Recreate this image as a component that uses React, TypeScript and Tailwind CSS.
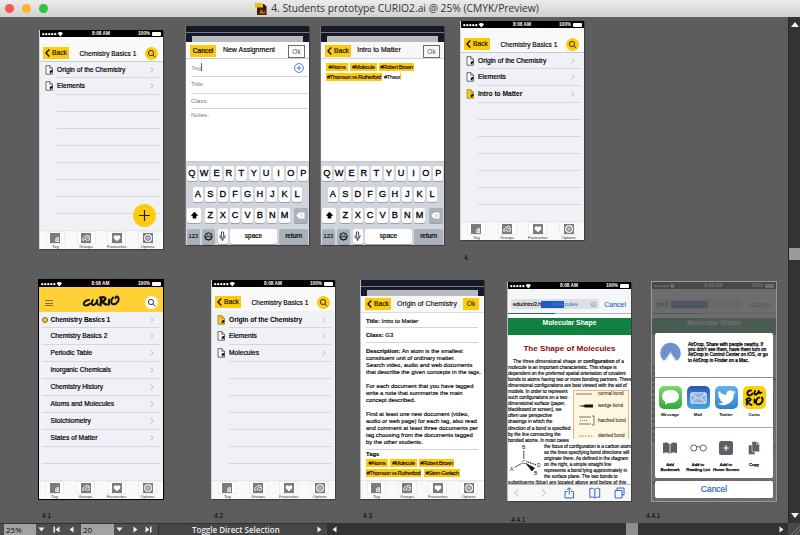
import type { ReactNode } from "react";

const SANS = "font-['Liberation_Sans',Arial,sans-serif]";

/* ---------- shared phone chrome ---------- */

function StatusBar() {
  return (
    <div className="flex h-[7px] shrink-0 items-center justify-between bg-black pr-[2px] pl-[2px] text-[4.700px] leading-[7px] font-bold text-white">
      <svg width="22" height="6" viewBox="0 0 22 6" fill="currentColor">
        {[1, 4, 7, 10, 13].map((x) => (
          <circle key={x} cx={x + 0.3} cy="3.2" r="1.15" />
        ))}
        <path d="M15.600 2.200Q18.300 0 21 2.200L18.300 5.400Z" />
      </svg>
      <span>8:08 AM</span>
      <span className="flex items-center gap-[2px]">
        <span>100%</span>
        <span className="h-[4px] w-[9px] rounded-[1px] bg-current" />
      </span>
    </div>
  );
}

function BackButton() {
  return (
    <div className="flex h-[12px] w-[26px] items-center gap-[2px] bg-[#fdcb0b] pl-[2px] text-[6.700px] leading-[12px] text-[#1c1a10] [-webkit-text-stroke:0.200px]">
      <svg width="5" height="8" viewBox="0 0 5 8" fill="none" stroke="#111" strokeWidth="1.400">
        <path d="M4.300.5 1 4l3.300 3.500" />
      </svg>
      <span>Back</span>
    </div>
  );
}

function SearchButton({ light = false }: { light?: boolean }) {
  return (
    <div className={`flex size-[13px] items-center justify-center rounded-full ${light ? "bg-white" : "bg-[#fdcb0b]"}`}>
      <svg width="9" height="9" viewBox="0 0 9 9" fill="none" stroke="#222" strokeWidth="0.9">
        <circle cx="4" cy="4" r="2.600" />
        <path d="m6 6 2.300 2.300" />
      </svg>
    </div>
  );
}

function TabGlyph({ kind }: { kind: string }) {
  return (
    <svg width="10" height="10" viewBox="0 0 10 10">
      <rect width="10" height="10" fill="#7c7c7c" />
      {kind === "Tag" && (
        <>
          <path d="M5.300 5.600 6.800 4.300H9V9H5.300Z" fill="#f2f2f2" />
          <path d="M6.500 5v3.500M7.800 5v3.500M5.800 6h2.900M5.800 7.500h2.900" stroke="#999" strokeWidth=".35" />
        </>
      )}
      {kind === "Groups" && (
        <g fill="none" stroke="#f2f2f2" strokeWidth=".9">
          <path d="M1.800 7.500V5L4.500 3l1.400 1.400L3.600 6.600Z" />
          <path d="M4.700 3 7 2l1.300 1.800v3.400H5.300L4 6M6 5l2-1" />
        </g>
      )}
      {kind === "Favourites" && (
        <path d="M5 8.200 1.800 5.200C.9 3.700 3.300 1 5 3.200 6.700 1 9.100 3.700 8.200 5.200Z" fill="#fff" />
      )}
      {kind === "Options" && (
        <g fill="none" stroke="#fff">
          <circle cx="5" cy="5" r="3.400" strokeWidth="1.300" />
          <circle cx="5" cy="5" r="1.300" strokeWidth=".8" />
          <path d="M5 1.500V3.500M5 6.500v2M1.500 5h2M6.500 5h2" stroke="#7c7c7c" strokeWidth=".7" />
        </g>
      )}
    </svg>
  );
}

function TabBar() {
  return (
    <div className="flex h-[19px] shrink-0 justify-around border-t border-[#e6e7ea] bg-[#f9f9f9]">
      {["Tag", "Groups", "Favourites", "Options"].map((kind) => (
        <div key={kind} className="flex w-[31px] flex-col items-center">
          <div className="flex h-[13px] w-[19px] items-center justify-center border border-[#ececec] bg-[#fcfcfc]">
            <TabGlyph kind={kind} />
          </div>
          <span className="text-[4.200px] leading-[5px] text-[#333]">{kind}</span>
        </div>
      ))}
    </div>
  );
}

function Artboard({ pos, frame = "", children }: { pos: string; frame?: string; children: ReactNode }) {
  return (
    <div className={`absolute flex h-[219px] w-[124px] flex-col overflow-hidden bg-[#eff1f6] shadow-[1px_1px_1px_#404040] ${pos} ${frame}`}>
      {children}
    </div>
  );
}

/* ---------- list screens ---------- */

function Chevron() {
  return (
    <svg width="4" height="6" viewBox="0 0 4 6" fill="none" stroke="#b4b6ba" strokeWidth=".9">
      <path d="m.600.400 2.400 2.500-2.400 2.600" />
    </svg>
  );
}

function DocIcon({ active }: { active?: boolean }) {
  return (
    <svg width="9" height="10" viewBox="0 0 9 10">
      <path d="M1 .6H4.700L7.500 3.300V9.200H1Z" fill={active ? "#fdc90c" : "#f7f8fb"} stroke={active ? "#8a7430" : "#333"} strokeWidth=".7" />
      <path d="M4.700.600V3.300H7.500" fill="none" stroke={active ? "#8a7430" : "#333"} strokeWidth=".6" />
      <path d="M4.800 5.600h1.700v2.600H4.800zM6 5.100h1.400v1.800H6z" fill="#111" />
    </svg>
  );
}

type Row = { label: string; active?: boolean };

function DocList({ pos, rows, fab, rule = true }: { pos: string; rows: Row[]; fab?: boolean; rule?: boolean }) {
  const all: (Row | null)[] = Array.from({ length: 9 }, (_, i) => rows[i] ?? null);
  return (
    <Artboard pos={pos} frame="border-l border-[#d8d8d8]">
      <StatusBar />
      <div
        className={`flex h-[25px] shrink-0 justify-between border-b bg-[#f9f9f9] pr-[5px] pl-[3px] ${rule ? "border-[#c9cacc] pt-[10px]" : "border-[#eff1f6] pt-[9px]"}`}
      >
        <BackButton />
        <span className="ml-[2px] text-[6.660px] leading-[13px] whitespace-nowrap text-black [-webkit-text-stroke:0.150px]">Chemistry Basics 1</span>
        <SearchButton />
      </div>
      <div className="grow">
        {all.map((row, i) => (
          <div key={i} className={`flex pr-[3px] pl-[5px] ${i === 0 ? "h-[16px]" : "h-[17px]"}`}>
            <div className="w-[12px] pt-[3px]">{row && <DocIcon active={row.active} />}</div>
            <div className="flex grow items-center justify-between border-b border-[#d5d7dc] pr-[6px]">
              <span className={`text-[6.700px] leading-[8px] whitespace-nowrap text-black ${row?.active ? "font-bold tracking-[-0.050px]" : "[-webkit-text-stroke:0.200px]"}`}>{row?.label}</span>
              {row && <Chevron />}
            </div>
          </div>
        ))}
      </div>
      {fab && (
        <div className="absolute right-[7px] bottom-[22px] flex size-[23px] items-center justify-center rounded-full bg-[#fdcb12]">
          <svg width="13" height="13" viewBox="0 0 13 13" stroke="#222" strokeWidth="1.200">
            <path d="M6.500 1v11M1 6.500h11" />
          </svg>
        </div>
      )}
      <TabBar />
    </Artboard>
  );
}

function CurioMark() {
  return (
    <svg width="38" height="15" viewBox="0 0 38 15" fill="none" stroke="#111" strokeLinecap="round" strokeLinejoin="round">
      <path d="M7 6C3 5.800 .9 9.500 2.300 11 3.700 12 6.500 11 8.200 9.600" strokeWidth="1.900" />
      <path d="M10.800 6C9.300 8.500 9.500 11.300 11.500 11 13.500 10.500 14.800 8 15.300 6 14.700 8.600 15 10.300 16.600 10.600" strokeWidth="1.900" />
      <path d="M19.300 4 18.500 11.300M18 3.600C22 2.200 24.500 4 23 5.700 22 6.900 20 7.500 19.500 7.500 21 8 22.500 10.300 24.800 10.600" strokeWidth="2.300" />
      <path d="M27.300 5.600 26.800 10.400" strokeWidth="2.300" />
      <path d="M31 3.500C28.700 6 28.600 10.300 31.500 10.300 35 10.300 38 5.600 36 3 35 2 33.300 2.700 33.600 4.300" strokeWidth="1.900" />
    </svg>
  );
}

const SUBJECTS = [
  "Chemistry Basics 1",
  "Chemistry Basics 2",
  "Periodic Table",
  "Inorganic Chemicals",
  "Chemistry History",
  "Atoms and Molecules",
  "Stoichiometry",
  "States of Matter",
  "",
];

function HomeScreen({ pos }: { pos: string }) {
  return (
    <Artboard pos={pos} frame="outline outline-black">
      <StatusBar />
      <div className="flex h-[25px] shrink-0 justify-between bg-[#ffd137] pr-[5px] pl-[6px]">
        <div className="mt-[13px] flex h-[6px] w-[8px] flex-col justify-between">
          <div className="h-px bg-[#7f6d31]" />
          <div className="h-px bg-[#7f6d31]" />
          <div className="h-px bg-[#7f6d31]" />
        </div>
        <div className="mt-[7px] ml-[3px]">
          <CurioMark />
        </div>
        <div className="mt-[9px]">
          <SearchButton light />
        </div>
      </div>
      <div className="grow pr-[3px] pl-[3px]">
        {SUBJECTS.map((s, i) => (
          <div key={i} className={`flex items-center border-b border-[#d5d7dc] pr-[6px] ${i === 0 ? "h-[16px]" : "h-[17px]"}`}>
            <div className="w-[8.500px] shrink-0">{i === 0 && <div className="size-[6px] rounded-full border border-[#7a6a25] bg-[#fdcb12]" />}</div>
            <span className={`grow text-[6.660px] leading-[8px] whitespace-nowrap text-black ${i === 0 ? "font-bold tracking-[-0.100px]" : "[-webkit-text-stroke:0.200px]"}`}>{s}</span>
            {s && <Chevron />}
          </div>
        ))}
      </div>
      <TabBar />
    </Artboard>
  );
}

/* ---------- modal sheets ---------- */

function ModalTop() {
  return (
    <>
      <div className="h-[6px] shrink-0 bg-[#151a2b]" />
      <div className="h-px shrink-0 bg-[#777a82]" />
      <div className="flex h-[9px] shrink-0 flex-col bg-[#151a2b] px-[6px] pt-[3px]">
        <div className="grow bg-[#b9babc]" />
      </div>
    </>
  );
}

function Chip({ w, children }: { w: string; children: ReactNode }) {
  return (
    <span className={`flex h-[8px] items-center justify-center bg-[#fdc90c] text-[5.700px] leading-[8px] tracking-[-0.400px] whitespace-nowrap text-black [-webkit-text-stroke:0.100px] ${w}`}>
      {children}
    </span>
  );
}

function Key({ w, tone = "bg-[#fdfdfd]", children }: { w: string; tone?: string; children: ReactNode }) {
  return (
    <div className={`flex h-[15px] items-center justify-center rounded-[2px] leading-none text-black shadow-[0_1px_0_#9da1a8] ${w} ${tone}`}>
      {children}
    </div>
  );
}

function Letters({ set }: { set: string }) {
  return (
    <div className="flex gap-[2px]">
      {set.split("").map((c) => (
        <Key key={c} w="w-[10.400px]">
          <span className="text-[9.200px] [-webkit-text-stroke:0.300px]">{c}</span>
        </Key>
      ))}
    </div>
  );
}

function Keyboard() {
  return (
    <div className="flex h-[84px] shrink-0 flex-col gap-[6px] border-t border-[#c2c7ce] bg-[#d0d5dc] px-[1px] pt-[4px] text-[6px]">
      <div className="flex justify-center">
        <Letters set="QWERTYUIOP" />
      </div>
      <div className="flex justify-center">
        <Letters set="ASDFGHJKL" />
      </div>
      <div className="flex justify-between">
        <Key w="w-[14px]">
          <svg width="9" height="9" viewBox="0 0 9 9">
            <path d="M4.500.800 8.300 4.700H6.300V7.500H2.700V4.700H.700Z" />
          </svg>
        </Key>
        <Letters set="ZXCVBNM" />
        <Key w="w-[14px]" tone="bg-[#a9b1bb]">
          <svg width="9" height="7" viewBox="0 0 9 7">
            <path d="M3 .500H8.500V6.500H3L.300 3.500Z" fill="#fff" />
            <path d="m4.300 2.200 2.500 2.600m0-2.600L4.300 4.800" stroke="#a9b1bb" strokeWidth=".7" />
          </svg>
        </Key>
      </div>
      <div className="flex gap-[2.500px]">
        <Key w="w-[13px]" tone="bg-[#a9b1bb]">
          <span className="text-[5.800px] [-webkit-text-stroke:0.100px]">123</span>
        </Key>
        <Key w="w-[13px]" tone="bg-[#a9b1bb]">
          <svg width="9" height="9" viewBox="0 0 9 9" fill="none" stroke="#111" strokeWidth=".9">
            <circle cx="4.500" cy="4.500" r="3.700" />
            <path d="M1.300 4.700H7.700C7.300 8.500 1.700 8.500 1.300 4.700Z" />
            <path d="M3.100 2v1.300M5.900 2v1.300" />
          </svg>
        </Key>
        <Key w="w-[10px]">
          <svg width="7" height="11" viewBox="0 0 7 11" fill="none" stroke="#111" strokeWidth=".8">
            <rect x="2.300" y=".8" width="2.400" height="6" rx="1.200" />
            <path d="M.900 4.500C.900 9.300 6.100 9.300 6.100 4.500M3.500 8v2" />
          </svg>
        </Key>
        <Key w="w-[47px]">
          <span className="text-[6.500px] [-webkit-text-stroke:0.200px]">space</span>
        </Key>
        <Key w="w-[29px]" tone="bg-[#a9b1bb]">
          <span className="text-[6.500px] [-webkit-text-stroke:0.200px]">return</span>
        </Key>
      </div>
    </div>
  );
}

function OkOutline() {
  return <div className="h-[13px] w-[17px] border border-[#6b6b6b] text-center text-[6.500px] leading-[12px] text-[#555]">Ok</div>;
}

function NewAssignment({ pos }: { pos: string }) {
  return (
    <Artboard pos={pos} frame="border-l border-[#777]">
      <ModalTop />
      <div className="flex h-[17px] shrink-0 items-start justify-between border-b border-[#c9cacc] bg-[#fdfdfd] pt-[2.500px] pr-[4px] pl-[4px]">
        <div className="h-[12px] w-[26px] bg-[#fdcb0b] text-center text-[6.600px] leading-[12px] text-black [-webkit-text-stroke:0.200px]">Cancel</div>
        <span className="mr-[6px] text-[7px] leading-[9px] whitespace-nowrap text-black [-webkit-text-stroke:0.150px]">New Assignment</span>
        <OkOutline />
      </div>
      <div className="grow bg-white pr-px pl-[5px] text-[6.200px] leading-[8px] text-[#777]">
        <div className="flex h-[18px] items-center justify-between border-b border-[#d8d8d8] pr-[4px]">
          <div className="flex items-center">
            <span className="text-[#999]">Tag</span>
            <span className="-mt-px h-[8px] w-px bg-[#2f62c4]" />
          </div>
          <svg width="10" height="10" viewBox="0 0 9 9" fill="none" stroke="#3f6fce" strokeWidth=".8">
            <circle cx="4.500" cy="4.500" r="4" />
            <path d="M4.500 2.300v4.400M2.300 4.500h4.400" />
          </svg>
        </div>
        <div className="flex h-[17px] items-center border-b border-[#d8d8d8] pb-[2px]">Title:</div>
        <div className="flex h-[15px] items-center border-b border-[#d8d8d8] pb-px">Class:</div>
        <div className="pt-[2px]">Notes:</div>
      </div>
      <Keyboard />
    </Artboard>
  );
}

function IntroToMatter({ pos }: { pos: string }) {
  return (
    <Artboard pos={pos} frame="border-l border-[#777]">
      <ModalTop />
      <div className="flex h-[17px] shrink-0 items-start justify-between border-b border-[#d4d4d4] bg-[#f7f7f7] pt-[2.500px] pr-[4px] pl-[4px]">
        <BackButton />
        <span className="mr-[16px] text-[7px] leading-[9px] whitespace-nowrap text-black [-webkit-text-stroke:0.150px]">Intro to Matter</span>
        <OkOutline />
      </div>
      <div className="flex grow flex-col gap-[1.500px] bg-white pt-[4px] pl-[5px]">
        <div className="flex gap-[2px]">
          <Chip w="w-[22px]">#Atoms</Chip>
          <Chip w="w-[27px]">#Molecule</Chip>
          <Chip w="w-[35px]">#Robert Brown</Chip>
        </div>
        <div className="flex items-center gap-[2px]">
          <Chip w="w-[56px]">#Thomson vs Rutherford</Chip>
          <span className="text-[5.700px] leading-[8px] tracking-[-0.300px] text-black [-webkit-text-stroke:0.100px]">#Theor</span>
          <span className="-ml-[2px] h-[7px] w-px bg-[#fdc90c]" />
        </div>
      </div>
      <Keyboard />
    </Artboard>
  );
}

function OriginOfChemistry({ pos }: { pos: string }) {
  return (
    <Artboard pos={pos} frame="border-l border-[#bbb]">
      <ModalTop />
      <div className="flex h-[17px] shrink-0 items-start justify-between border-b border-[#dcdcdc] bg-[#f7f7f7] pt-[2px] pr-[5px] pl-[4px]">
        <BackButton />
        <span className="text-[7px] leading-[12.500px] whitespace-nowrap text-black [-webkit-text-stroke:0.100px]">Origin of Chemistry</span>
        <div className="h-[12px] w-[16px] bg-[#fdcb0b] text-center text-[6.500px] leading-[12px] text-black">Ok</div>
      </div>
      <div className="grow bg-white pr-[6px] pl-[5px] text-[5.900px] leading-[7px] whitespace-nowrap text-black [-webkit-text-stroke:0.150px]">
        <div className="h-[15px] border-b border-[#d5d5d5] pt-[5px]">
          <b>Title:</b> Intro to Matter
        </div>
        <div className="h-[15px] border-b border-[#d5d5d5] pt-[4px]">
          <b>Class:</b> G3
        </div>
        <div className="flex h-[107px] flex-col gap-[7px] border-b border-[#d5d5d5] pt-[4.500px]">
          <p>
            <b>Description:</b> An atom is the smallest
            <br />
            constituent unit of ordinary matter.
            <br />
            Search video, audio and web documents
            <br />
            that describe the given concepts in the tags.
          </p>
          <p>
            For each document that you have tagged
            <br />
            write a note that summarize the main
            <br />
            concept described.
          </p>
          <p>
            Find at least one new document (video,
            <br />
            audio or web page) for each tag, also read
            <br />
            and comment at least three documents per
            <br />
            tag choosing from the documents tagged
            <br />
            by the other students.
          </p>
        </div>
        <div className="pt-px font-bold">Tags</div>
        <div className="mt-[1px] flex gap-[2px]">
          <Chip w="w-[22px]">#Atoms</Chip>
          <Chip w="w-[27px]">#Molecule</Chip>
          <Chip w="w-[35px]">#Robert Brown</Chip>
        </div>
        <div className="mt-[1.500px] flex gap-[3px]">
          <Chip w="w-[55px]">#Thomson vs Rutherford</Chip>
          <Chip w="w-[36px]">#Stern-Gerlach</Chip>
        </div>
      </div>
      <TabBar />
    </Artboard>
  );
}

/* ---------- browser screens ---------- */

const INTRO = [
  "molecule is an important characteristic. This shape is",
  "dependent on the preferred spatial orientation of covalent",
  "bonds to atoms having two or more bonding partners. Three",
  "dimensional configurations are best viewed with the aid of",
];

const LEFT = [
  "models. In order to represent",
  "such configurations on a two-",
  "dimensional surface (paper,",
  "blackboard or screen), we",
  "often use perspective",
  "drawings in which the",
  "direction of a bond is specified",
  "by the line connecting the",
  "bonded atoms. In most cases",
];

const RIGHT = [
  "the focus of configuration is a carbon atom",
  "so the lines specifying bond directions will",
  "originate there. As defined in the diagram",
  "on the right, a simple straight line",
  "represents a bond lying approximately in",
  "the surface plane. The two bonds to",
];

function BondLegend() {
  return (
    <div className="mt-px flex h-[49px] w-[56px] flex-col justify-between border border-b-0 border-[#f3b183] bg-[#fef7dd] pr-[3px] pb-px pl-[2px] text-[4.600px] leading-[5px] [-webkit-text-stroke:0px]">
      <div className="flex items-center justify-between">
        <svg width="16" height="4"><path d="M0 2H16" stroke="#555" strokeWidth=".8" /></svg>
        <span className="w-[27px]">normal bond</span>
      </div>
      <div className="flex items-center justify-between">
        <svg width="17" height="4"><path d="M2 2 8 1.200 9 .500H17V3.500H9L8 2.800Z" fill="#111" /></svg>
        <span className="w-[27px]">wedge bond</span>
      </div>
      <div className="flex items-center justify-between">
        <svg width="20" height="11" fill="none" stroke="#555" strokeWidth=".8">
          <path d="M3 2H15M3 9H15M16 1h2v9h-2" />
          <path d="M4 5.500H12" strokeDasharray="1 1" />
        </svg>
        <span className="w-[27px]">hatched bond</span>
      </div>
      <div className="flex items-center justify-between">
        <svg width="18" height="4"><path d="M3 2H18" stroke="#555" strokeWidth=".8" strokeDasharray="1.500 1.500" /></svg>
        <span className="w-[27px]">dashed bond</span>
      </div>
    </div>
  );
}

function Molecule() {
  return (
    <svg width="34" height="36" viewBox="0 0 34 36" fill="none" stroke="#222" strokeWidth=".8" className="text-[5px]">
      <g fill="#222" stroke="none">
        <text x="14" y="5.500">B</text>
        <text x="14" y="20">C</text>
        <text x="2" y="27">A</text>
        <text x="29" y="23">D</text>
        <text x="26" y="31">B</text>
      </g>
      <path d="M15.800 6.500V15M13.500 19.500 6.500 23.500" />
      <path d="m18.500 17.500 10 3.500" strokeDasharray="1 .8" strokeWidth="1.300" />
      <path d="m18 19.500 8.500 4.500-2.500 3Z" fill="#111" />
    </svg>
  );
}

function WebPage({ url, picked, rest }: { url: string; picked: string; rest: string }) {
  return (
    <>
      <StatusBar />
      <div className="flex h-[25px] shrink-0 flex-col justify-end bg-[#f5f6f7]">
        <div className="mb-[4px] flex h-[10px] items-center justify-between pr-[5px] pl-[3px] text-[5.700px] leading-[7px]">
          <div className="flex h-[10px] w-[88px] items-center rounded-[2px] bg-[#dcdfe4] pr-[3px] pl-[2px] text-black">
            <span className="tracking-[-0.150px] [-webkit-text-stroke:0.100px]">{url}</span>
            <span className={`h-[7px] bg-[#1f5cbc] text-right tracking-[0.100px] text-[#4a7fd6] ${picked}`}>{rest && "Mole"}</span>
            <span className="grow text-[#2a62c0]">{rest}</span>
            <span className="flex size-[5px] items-center justify-center rounded-full bg-[#a9abb0] text-[5px] leading-none text-white">×</span>
          </div>
          <span className="text-[7px] text-[#2864c8] [-webkit-text-stroke:0.100px]">Cancel</span>
        </div>
        <div className="flex h-px bg-[#b9bbbe]">
          <div className="w-[47px] bg-[#1f5cbc]" />
        </div>
      </div>
      <div className="flex grow flex-col overflow-hidden bg-white text-black">
        <div className="mt-[4px] h-[17px] shrink-0 bg-[#10813f] text-center text-[6.800px] leading-[10px] font-bold text-white">Molecular Shape</div>
        <div className="h-[24px] shrink-0 pt-[9px] text-center text-[8.100px] leading-[9px] font-bold text-[#8c0d12]">The Shape of Molecules</div>
        <div className="h-[125px] shrink-0 overflow-hidden text-[4.900px] leading-[6.050px] whitespace-nowrap [-webkit-text-stroke:0.120px]">
          <div className="pl-[5px]">
            The three dimensional shape or <b>configuration</b> of a
          </div>
          {INTRO.map((l) => (
            <div key={l} className="tracking-[-0.110px]">{l}</div>
          ))}
          <div className="flex justify-between pr-[2px]">
            <div>
              {LEFT.map((l) => (
                <div key={l} className="tracking-[-0.110px]">{l}</div>
              ))}
            </div>
            <BondLegend />
          </div>
          <div className="flex gap-[2px]">
            <Molecule />
            <div>
              {RIGHT.map((l) => (
                <div key={l} className="tracking-[-0.120px]">{l}</div>
              ))}
            </div>
          </div>
          <div>substituents (blue) are located above and below of this</div>
        </div>
      </div>
      <div className="flex h-[17px] shrink-0 items-center justify-between border-t border-[#b8b8b8] bg-[#f8f8f8] pr-[6px] pl-[6px]">
        <svg width="112" height="12" viewBox="0 0 112 12" fill="none" stroke="#2f66c8" strokeWidth="1">
          <path d="M4.500 2 1 5.800l3.500 3.800M28 2l3.500 3.800L28 9.600" stroke="#b5b7bb" />
          <path d="M54 4.500H51.500V11H60V4.500H57.500M55.700 7.500V.800M53.500 2.800 55.700.700 58 2.800" />
          <path d="M81.500 2.500C80 1 78 1 76.500 1.500V10.500C78.500 9.800 80 10 81.500 11 83.500 10 85 9.800 86.500 10.500V1.500C85 1 83.500 1 81.500 2.500V11" />
          <path d="M102 3.500h7v7.500h-7zM104 3.500V1h7v7h-2" />
        </svg>
      </div>
    </>
  );
}

function MoleculesPage({ pos }: { pos: string }) {
  return (
    <Artboard pos={pos} frame="border-l border-[#bbb]">
      <WebPage url="edu/intro3.h" picked="w-[23px]" rest="cules" />
    </Artboard>
  );
}

function ShareTile({ label, tone, children }: { label: string; tone: string; children: ReactNode }) {
  return (
    <div className="flex w-[28px] flex-col items-center gap-[2.500px]">
      <div className={`flex size-[23px] items-center justify-center rounded-[5px] ${tone}`}>{children}</div>
      <span className="text-[4.400px] leading-[5px] font-bold tracking-[-0.050px]">{label}</span>
    </div>
  );
}

function ActionTile({ lines, children }: { lines: string[]; children: ReactNode }) {
  return (
    <div className="flex w-[28px] flex-col items-center">
      <div className="flex h-[15px] items-center">{children}</div>
      <div className="mt-[7px] text-center text-[4.300px] leading-[5px] tracking-[-0.020px] whitespace-nowrap [-webkit-text-stroke:0.250px]">
        {lines.map((l) => (
          <div key={l} className="h-[5px]">{l}</div>
        ))}
      </div>
    </div>
  );
}

function ShareSheet() {
  return (
    <div className="absolute inset-0 flex flex-col bg-[#555555]/85 px-[3px] pt-[51px] text-black">
      <div className="h-[145px] shrink-0 rounded-[2px] bg-white">
        <div className="flex h-[45px] gap-[7px] border-b border-[#8b8b8b] pt-[9px] pl-[5px]">
          <svg width="21" height="21" viewBox="0 0 21 21" fill="none" stroke="#4d6fae" strokeWidth=".9">
            <path d="M10.500 10.500 4 19A10.300 10.300 0 1 1 17 19Z" fill="#7b9ad2" stroke="none" />
            {[2.5, 4.5, 6.5, 8.5].map((r) => (
              <circle key={r} cx="10.500" cy="10.500" r={r} strokeWidth=".5" stroke="#4d72b8" />
            ))}
            <path d="M10.500 11 5.500 21H15.500Z" fill="#fff" stroke="none" />
          </svg>
          <div className="text-[4.600px] leading-[5.200px] whitespace-nowrap [-webkit-text-stroke:0.250px]">
            <div>AirDrop. Share with people nearby. If</div>
            <div>you don’t see them, have them turn on</div>
            <div>AirDrop in Control Center on iOS, or go</div>
            <div>to AirDrop in Finder on a Mac.</div>
          </div>
        </div>
        <div className="flex h-[50px] justify-between border-b border-[#a8a8a8] pt-[8px] pr-[5px] pl-[1px]">
          <ShareTile label="Message" tone="bg-linear-to-b from-[#7fd66c] to-[#31ab3a]">
            <svg width="19" height="17" viewBox="0 0 19 17">
              <path d="M9.500 1C4.500 1 1 3.800 1 7.500c0 2.300 1.300 4.200 3.400 5.400L4 15.600 7.500 13.900C14 14.500 18 11.500 18 7.500S14.500 1 9.500 1Z" fill="#fff" />
            </svg>
          </ShareTile>
          <ShareTile label="Mail" tone="bg-linear-to-b from-[#2b59b5] to-[#49a6e0]">
            <svg width="17" height="12" viewBox="0 0 17 12" fill="none" stroke="#fff" strokeWidth=".8">
              <rect x=".8" y=".800" width="15.400" height="10.400" rx="1" fill="#8fb2e2" />
              <path d="m1 1.500 7.500 5.500L16 1.500M1.200 10.800l5-5M15.800 10.800l-5-5" />
            </svg>
          </ShareTile>
          <ShareTile label="Twitter" tone="bg-linear-to-b from-[#62b0e6] to-[#3485c8]">
            <svg width="19" height="16" viewBox="0 0 24 20" fill="#fff">
              <path d="M23.500 2.500a9 9 0 0 1-2.600.7 4.600 4.600 0 0 0 2-2.500 9 9 0 0 1-2.900 1.100 4.700 4.700 0 0 0-8 4.300A13.300 13.300 0 0 1 2.300 1.200a4.700 4.700 0 0 0 1.500 6.300 4.600 4.600 0 0 1-2.100-.6c0 2.300 1.600 4.200 3.800 4.700-.7.200-1.400.2-2.100.1a4.700 4.700 0 0 0 4.400 3.200A9.400 9.400 0 0 1 .900 16.900 13.300 13.300 0 0 0 21.200 5a9 9 0 0 0 2.300-2.500Z" />
            </svg>
          </ShareTile>
          <ShareTile label="Curio" tone="bg-[#ffd00a]">
            <svg width="22" height="21" viewBox="0 0 22 21" fill="none" stroke="#111" strokeWidth="1.900" strokeLinecap="round" strokeLinejoin="round">
              <path d="M8 3.500C4.500 3 3.500 7 5.300 8.200 6.500 9 8.500 8 9.500 6.500M12 4C11 6.500 11.500 8 13 7.500 14.500 7 15.500 5.500 15.800 4 16 6 17 6.500 18.500 5.500" />
              <path d="M3.300 12.500C5 10.500 9 11.300 7 13.500L4 15.200 8.500 18M3.800 13V17.500M11.500 12.500V15.500M16 10.500C12.500 12 12 17.500 15 17.500 18.500 17.500 21 13 18.800 10.500" />
            </svg>
          </ShareTile>
        </div>
        <div className="flex justify-between pt-[12px] pr-[5px] pl-[1px]">
          <ActionTile lines={["Add", "Bookmark"]}>
            <svg width="14" height="12" viewBox="0 0 14 12" fill="#5c5e68">
              <path d="M0 1C2.500 0 5 .300 6.600 2V12C5 10.300 2.500 10.300 0 11.300ZM14 1C11.500 0 9 .300 7.400 2V12C9 10.300 11.500 10.300 14 11.300Z" />
            </svg>
          </ActionTile>
          <ActionTile lines={["Add to", "Reading List"]}>
            <svg width="17" height="8" viewBox="0 0 17 8" fill="none" stroke="#5c5e68" strokeWidth="1">
              <circle cx="3.800" cy="4" r="3.100" />
              <circle cx="13.200" cy="4" r="3.100" />
              <path d="M6.800 3.200Q8.500 2 10.200 3.200" />
            </svg>
          </ActionTile>
          <ActionTile lines={["Add to", "Home Screen"]}>
            <svg width="14" height="14" viewBox="0 0 14 14">
              <rect width="14" height="14" rx="2.500" fill="#5c5e68" />
              <path d="M7 4.200V9.800M4.200 7H9.800" stroke="#fff" strokeWidth="1.200" />
            </svg>
          </ActionTile>
          <ActionTile lines={["Copy"]}>
            <svg width="12" height="14" viewBox="0 0 12 14" fill="#5c5e68" stroke="#fff" strokeWidth=".5">
              <path d="M.500 4H7V13.500H.500Z" />
              <path d="M4 .500H8.500L11.500 3.500V10.800H4Z" />
              <path d="M8.500.500V3.500H11.500" />
            </svg>
          </ActionTile>
        </div>
      </div>
      <div className="mt-[3px] h-[17px] rounded-[2px] bg-white text-center text-[8.500px] leading-[17px] text-[#2b63c6] [-webkit-text-stroke:0.200px]">Cancel</div>
    </div>
  );
}

/* ---------- Illustrator window ---------- */

function TitleBar() {
  return (
    <div className="relative flex h-[17px] shrink-0 items-center justify-center bg-linear-to-b from-[#ebebeb] to-[#d1d1d1]">
      <div className="absolute top-[4px] left-[5px] flex gap-[8px]">
        <div className="size-[9px] rounded-full bg-[#fb5650]" />
        <div className="size-[9px] rounded-full bg-[#fdb62c]" />
        <div className="size-[9px] rounded-full bg-[#27c63f]" />
      </div>
      <div className="flex items-center gap-[4px] pr-[6px]">
        <svg width="12" height="12" viewBox="0 0 12 12">
          <path d="M2 1H9L11.500 3.500V12H2Z" fill="#3a1c06" />
          <rect x="0" y="0" width="8" height="4.500" fill="#f5b90f" />
          <text x="4.300" y="10.500" fontSize="5.500" fontWeight="700" fill="#f39c1c">Ai</text>
        </svg>
        <span className="font-['Open_Sans','Noto_Sans',sans-serif] text-[10.300px] leading-[17px] whitespace-nowrap text-[#333]">4. Students prototype CURIO2.ai @ 25% (CMYK/Preview)</span>
      </div>
    </div>
  );
}

function Tri({ d, w = 7, h = 7 }: { d: string; w?: number; h?: number }) {
  return (
    <svg width={w} height={h} viewBox={`0 0 ${w} ${h}`} fill="#efefef" className="shrink-0">
      <path d={d} />
    </svg>
  );
}

const FIELD = "h-[11px] bg-[#a3a3a3] pl-[2px] text-[8px] leading-[11px] text-[#111]";

function BottomBar() {
  return (
    <div className="flex h-[12px] shrink-0 bg-[#333333] font-['Open_Sans','Noto_Sans',sans-serif]">
      <div className="flex w-[158px] items-center border-t border-[#303030] bg-[#4f4f4f] pl-[4px]">
        <div className={`w-[32px] ${FIELD}`}>25%</div>
        <div className="flex w-[11px] justify-center">
          <Tri d="M.500 1.500H6.500L3.500 5.500Z" />
        </div>
        <div className="flex w-[34px] items-center justify-center gap-[8px]">
          <Tri d="M.500.500H2V6.500H.500ZM6.500.500V6.500L2.500 3.500Z" />
          <Tri d="M5.500.500V6.500L1.500 3.500Z" />
        </div>
        <div className={`w-[33px] ${FIELD}`}>20</div>
        <div className="flex w-[11px] justify-center">
          <Tri d="M.500 1.500H6.500L3.500 5.500Z" />
        </div>
        <div className="flex grow items-center justify-center gap-[6px]">
          <Tri d="M1.500.500V6.500L5.500 3.500Z" />
          <Tri d="M5 .500H6.500V6.500H5ZM.500.500V6.500L4.500 3.500Z" />
        </div>
      </div>
      <div className="flex w-[170px] items-center justify-between border-x border-t border-[#303030] bg-[#464646] pr-[4px] pl-[33px]">
        <span className="text-[8px] leading-[11px] font-semibold whitespace-nowrap text-[#ececec]">Toggle Direct Selection</span>
        <Tri d="M1.500.500V6.500L5.500 3.500Z" />
      </div>
      <div className="flex grow items-center px-[3px]">
        <Tri d="M5.500.500V6.500L1.500 3.500Z" />
        <div className="ml-[288px] h-full w-[12px] bg-[#8f8f8f]" />
        <div className="grow" />
        <Tri d="M1.500.500V6.500L5.500 3.500Z" />
      </div>
      <div className="flex w-[12px] items-end justify-end bg-[#4a4a4a]">
        <svg width="10" height="10" stroke="#777" strokeWidth="1">
          <path d="M1 10 10 1M5 10l5-5" />
        </svg>
      </div>
    </div>
  );
}

function BoardLabel({ pos, children }: { pos: string; children: string }) {
  return <span className={`absolute text-[6.500px] leading-[8px] text-black ${pos}`}>{children}</span>;
}

export default function App() {
  return (
    <div className={`flex h-[535px] w-[800px] flex-col overflow-hidden ${SANS}`}>
      <TitleBar />
      <div className="flex h-[506px] shrink-0">
        <div className="relative grow overflow-hidden bg-[#5d5d5d]">
          <DocList pos="left-[39px] top-[13px]" fab rows={[{ label: "Origin of the Chemistry" }, { label: "Elements" }]} />
          <NewAssignment pos="left-[185px] top-[9px]" />
          <IntroToMatter pos="left-[320px] top-[9px]" />
          <DocList
            pos="left-[460px] top-[4px]"
            rows={[{ label: "Origin of the Chemistry" }, { label: "Elements" }, { label: "Intro to Matter", active: true }]}
          />
          <BoardLabel pos="left-[464px] top-[237px]">4.</BoardLabel>
          <HomeScreen pos="left-[39px] top-[263px]" />
          <BoardLabel pos="left-[42px] top-[495px]">4.1</BoardLabel>
          <DocList
            pos="left-[211px] top-[263px]"
            rule={false}
            rows={[{ label: "Origin of the Chemistry", active: true }, { label: "Elements" }, { label: "Molecules" }]}
          />
          <BoardLabel pos="left-[214px] top-[495px]">4.2</BoardLabel>
          <OriginOfChemistry pos="left-[360px] top-[263px]" />
          <BoardLabel pos="left-[363px] top-[495px]">4.3</BoardLabel>
          <MoleculesPage pos="left-[507px] top-[265px]" />
          <BoardLabel pos="left-[511px] top-[499px]">4.4.1</BoardLabel>
          <Artboard pos="left-[652px] top-[265px]" frame="outline outline-[#999]">
            <WebPage url="yle.fi" picked="w-[37px] ml-[3px]" rest="" />
            <ShareSheet />
          </Artboard>
          <BoardLabel pos="left-[646px] top-[495px]">4.4.1</BoardLabel>
        </div>
        <div className="flex w-[12px] shrink-0 flex-col items-center border-l border-[#272727] bg-[#333333] py-[4px]">
          <Tri d="M0 6H8L4 1Z" w={8} />
          <div className="mt-[220px] h-[12px] w-full bg-[#9a9a9a]" />
          <div className="grow" />
          <Tri d="M0 1H8L4 6Z" w={8} />
        </div>
      </div>
      <BottomBar />
    </div>
  );
}
